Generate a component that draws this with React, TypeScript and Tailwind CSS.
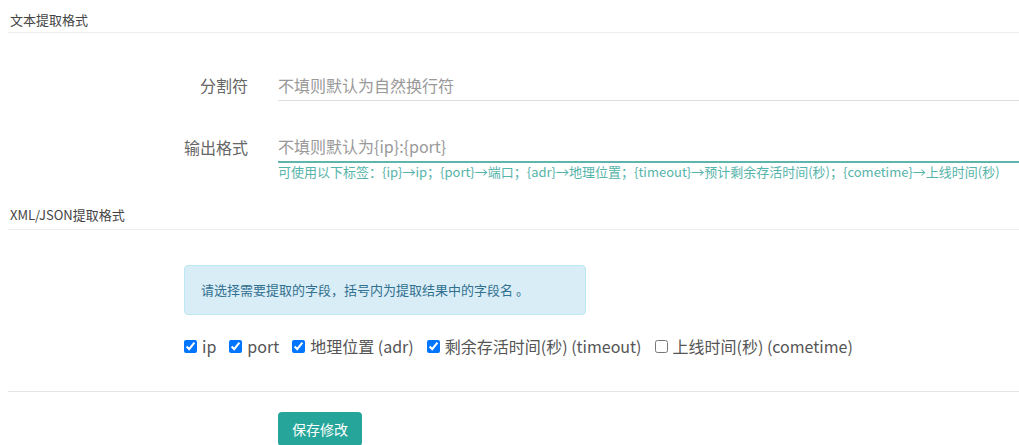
import { useState } from "react";

const fields = [
  { key: "ip", label: "ip", checked: true },
  { key: "port", label: "port", checked: true },
  { key: "adr", label: "地理位置 (adr)", checked: true },
  { key: "timeout", label: "剩余存活时间(秒) (timeout)", checked: true },
  { key: "cometime", label: "上线时间(秒) (cometime)", checked: false },
];

const SectionTitle = ({ title, className = "" }: { title: string; className?: string }) => (
  <div className={`ml-[8px] border-b border-[#eeeeee] pl-[2px] text-[13px] leading-[20px] text-[#444] ${className}`}>
    {title}
  </div>
);

export default function App() {
  const [checked, setChecked] = useState<Record<string, boolean>>(
    Object.fromEntries(fields.map((f) => [f.key, f.checked]))
  );

  return (
    <div className="h-[445px] w-[1019px] overflow-hidden bg-white font-['Noto_Sans_CJK_SC','Microsoft_YaHei',sans-serif]">
      {/* text format */}
      <SectionTitle title="文本提取格式" className="h-[33px] pt-[10px]" />

      <div className="mt-[36px] flex items-center">
        <label className="w-[248px] text-right text-[16px] text-[#666]">分割符</label>
        <input
          placeholder="不填则默认为自然换行符"
          className="ml-[30px] h-[32px] flex-1 border-b border-[#dddddd] bg-transparent text-[16px] text-[#555] placeholder-[#999] outline-none"
        />
      </div>

      <div className="mt-[30px] flex items-center">
        <label className="w-[248px] text-right text-[16px] text-[#666]">输出格式</label>
        <input
          placeholder="不填则默认为{ip}:{port}"
          className="ml-[30px] h-[32px] flex-1 border-b-2 border-[#5fb4ae] bg-transparent text-[16px] text-[#555] placeholder-[#999] outline-none"
        />
      </div>
      <div className="ml-[278px] mt-[1px] text-[13px] leading-[16px] text-[#55b4a9]">
        可使用以下标签：{"{ip}"}→ip；{"{port}"}→端口；{"{adr}"}→地理位置；{"{timeout}"}→预计剩余存活时间(秒)；{"{cometime}"}→上线时间(秒)
      </div>

      {/* xml / json format */}
      <SectionTitle title="XML/JSON提取格式" className="mt-[15px] h-[35px] pt-[10px]" />

      <div className="ml-[184px] mt-[35px] flex h-[50px] w-[402px] items-center rounded-[4px] border border-[#bce8f1] bg-[#d9edf7] px-[16px] text-[13px] text-[#31708f]">
        请选择需要提取的字段，括号内为提取结果中的字段名 。
      </div>

      <div className="ml-[184px] mt-[21px] flex h-[20px] items-center gap-[13px] text-[16px] text-[#555]">
        {fields.map((f) => (
          <label key={f.key} className="flex items-center gap-[5px] leading-[20px]">
            <input
              type="checkbox"
              checked={checked[f.key]}
              onChange={() => setChecked({ ...checked, [f.key]: !checked[f.key] })}
              className="m-0 h-[13px] w-[13px]"
            />
            <span>{f.label}</span>
          </label>
        ))}
      </div>

      <div className="ml-[8px] mt-[35px] border-b border-[#e5e5e5]" />

      <button className="ml-[278px] mt-[20px] h-[34px] w-[84px] rounded-[4px] bg-[#26a69a] text-[14px] text-white">
        保存修改
      </button>
    </div>
  );
}
